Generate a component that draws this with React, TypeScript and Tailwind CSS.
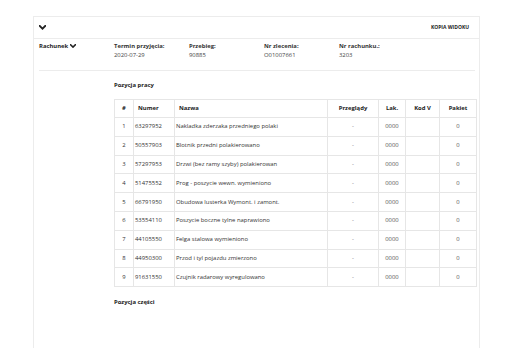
import React from "react";

const rows = [
  ["1", "63297952", "Nakladka zderzaka przedniego polaki"],
  ["2", "50557903", "Blotnik przedni polakierowano"],
  ["3", "57297953", "Drzwi (bez ramy szyby) polakierowan"],
  ["4", "51475552", "Prog - poszycie wewn. wymieniono"],
  ["5", "66791950", "Obudowa lusterka Wymont. i zamont."],
  ["6", "53554110", "Poszycie boczne tylne naprawiono"],
  ["7", "44105550", "Felga stalowa wymieniono"],
  ["8", "44950300", "Przod i tyl pojazdu zmierzono"],
  ["9", "91631550", "Czujnik radarowy wyregulowano"],
];

const info = [
  ["Termin przyjęcia:", "2020-07-29"],
  ["Przebieg:", "90885"],
  ["Nr zlecenia:", "O01007661"],
  ["Nr rachunku.:", "3203"],
];

function Chevron({ size = 7 }: { size?: number }) {
  return (
    <svg width={size} height={size * 0.7} viewBox="0 0 10 7" className="block">
      <path d="M1 1.2 L5 5.2 L9 1.2" fill="none" stroke="#222" strokeWidth="2.6" strokeLinecap="square" />
    </svg>
  );
}

export default function App() {
  return (
    <div
      className="w-full h-[361px] bg-white pt-[16px] overflow-hidden text-[5.9px] text-[#333]"
      style={{ fontFamily: '"Open Sans", "Noto Sans", sans-serif' }}
    >
      <div className="ml-[33px] w-[447px] h-[332px] border-l border-r border-t border-[#ececec]">
        {/* Header */}
        <div className="h-[22px] border-b border-[#ececec] flex items-center justify-between pl-[5px] pr-[10px]">
          <Chevron size={7} />
          <span className="font-bold uppercase text-[5px] text-[#222]">Kopia widoku</span>
        </div>

        {/* Info row */}
        <div className="ml-[5px] mr-[4px] h-[32px] border-b border-[#ececec] flex pt-[3px]">
          <div className="w-[75px] flex items-start gap-[2px] font-bold text-[#222] leading-[8px]">
            Rachunek
            <span className="mt-[1.5px]">
              <Chevron size={6} />
            </span>
          </div>
          {info.map(([label, value]) => (
            <div key={label} className="w-[75px] leading-[9px]">
              <div className="font-bold text-[#333]">{label}</div>
              <div className="text-[#444]">{value}</div>
            </div>
          ))}
        </div>

        {/* Work positions */}
        <div className="pl-[80px]">
          <div className="h-[28px] flex items-center font-bold text-[#222]">Pozycja pracy</div>
          <table className="table-fixed border-collapse w-[362px]">
            <colgroup>
              <col className="w-[19px]" />
              <col className="w-[41px]" />
              <col className="w-[153px]" />
              <col className="w-[51px]" />
              <col className="w-[27px]" />
              <col className="w-[34px]" />
              <col className="w-[37px]" />
            </colgroup>
            <thead>
              <tr className="h-[18px] font-bold text-[#222]">
                <th className="border border-[#e6e6e6] text-center font-bold">#</th>
                <th className="border border-[#e6e6e6] text-left pl-[4px] font-bold">Numer</th>
                <th className="border border-[#e6e6e6] text-left pl-[4px] font-bold">Nazwa</th>
                <th className="border border-[#e6e6e6] text-center font-bold">Przeglądy</th>
                <th className="border border-[#e6e6e6] text-center font-bold">Lak.</th>
                <th className="border border-[#e6e6e6] text-center font-bold">Kod V</th>
                <th className="border border-[#e6e6e6] text-center font-bold">Pakiet</th>
              </tr>
            </thead>
            <tbody>
              {rows.map(([n, num, name]) => (
                <tr key={n} className="h-[18.8px] text-[#333]">
                  <td className="border border-[#e6e6e6] text-center">{n}</td>
                  <td className="border border-[#e6e6e6] pl-[1px]">{num}</td>
                  <td className="border border-[#e6e6e6] pl-[1px]">{name}</td>
                  <td className="border border-[#e6e6e6] text-center text-[#777]">-</td>
                  <td className="border border-[#e6e6e6] text-center text-[#555]">0000</td>
                  <td className="border border-[#e6e6e6]"></td>
                  <td className="border border-[#e6e6e6] text-center text-[#555]">0</td>
                </tr>
              ))}
            </tbody>
          </table>
          <div className="h-[30px] flex items-center font-bold text-[#222]">Pozycja części</div>
        </div>
      </div>
    </div>
  );
}
